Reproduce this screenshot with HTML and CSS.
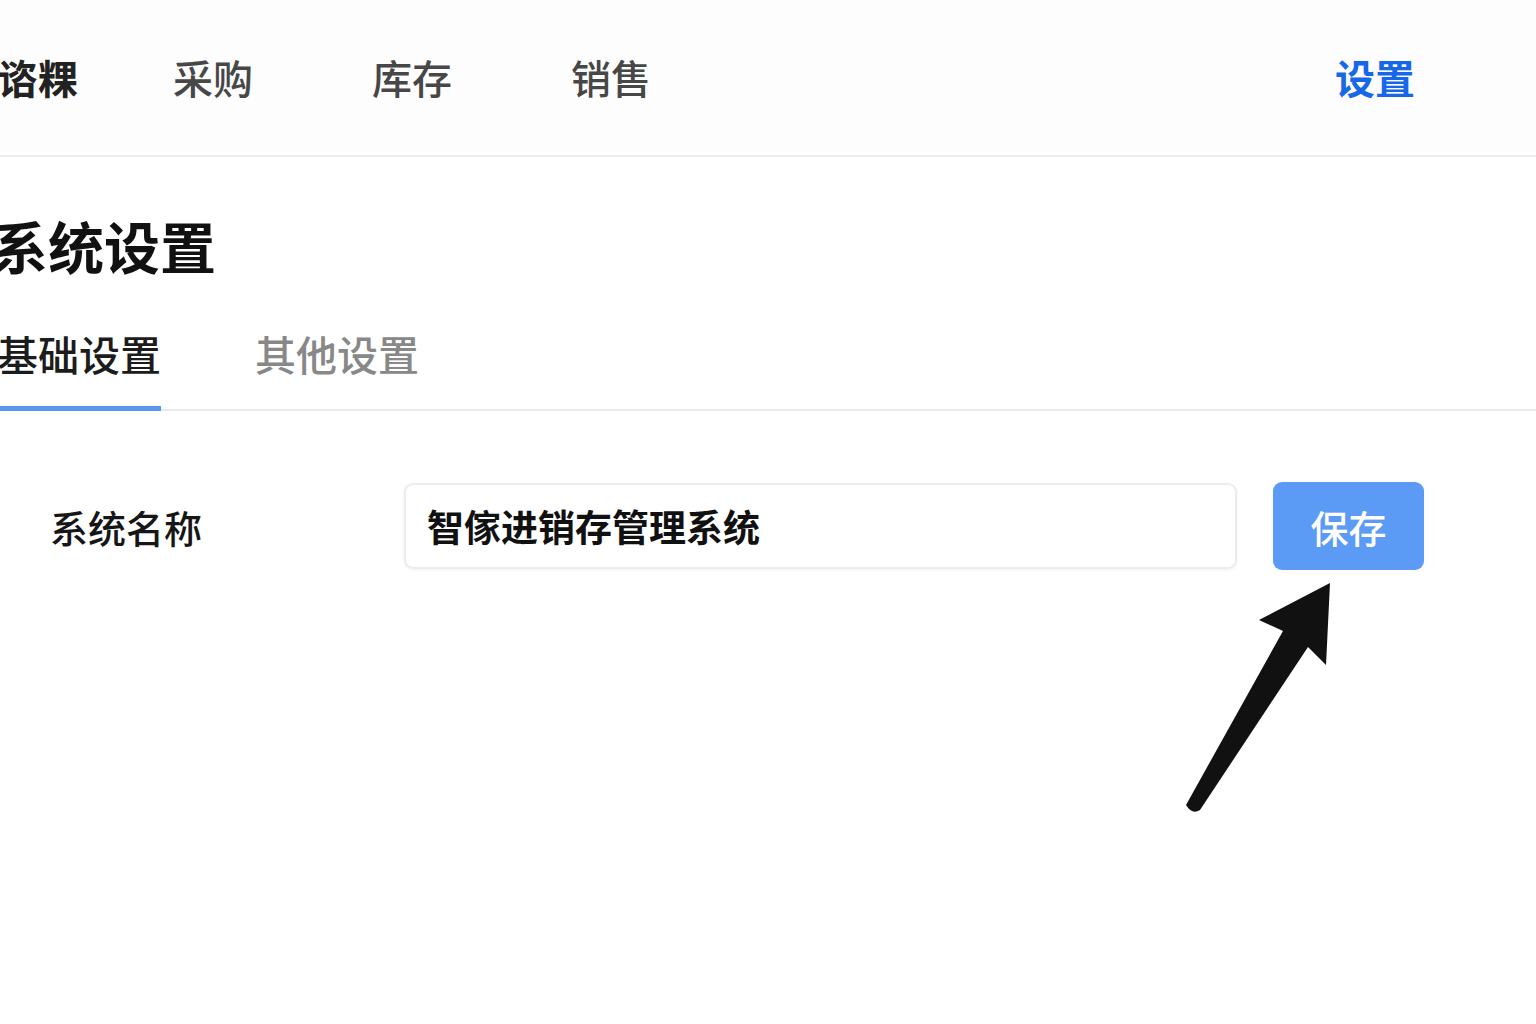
FILE: index.html
```html
<!DOCTYPE html>
<html lang="zh-CN">
<head>
<meta charset="utf-8">
<title>系统设置</title>
<link rel="stylesheet" href="styles.css">
</head>
<body>
<header class="nav">
  <a class="nav-item nav-first">谘粿</a>
  <a class="nav-item">采购</a>
  <a class="nav-item">库存</a>
  <a class="nav-item">销售</a>
  <a class="nav-item nav-active">设置</a>
</header>
<main class="main">
  <h1 class="title">系统设置</h1>
  <div class="tabs">
    <div class="tab tab-active">基础设置</div>
    <div class="tab">其他设置</div>
  </div>
  <div class="form-row">
    <label class="label">系统名称</label>
    <div class="input">智傢进销存管理系统</div>
    <button class="btn">保存</button>
  </div>
</main>
<svg class="arrow" width="180" height="250" viewBox="1170 575 180 250" xmlns="http://www.w3.org/2000/svg">
  <path d="M1330 583 L1326 665 L1308 647 L1200 810 Q1192 815 1186 805 L1283 631 L1259 620 Z" fill="#111"/>
</svg>
</body>
</html>
```
FILE: styles.css
```css
* { box-sizing: border-box; }
html, body { margin: 0; padding: 0; background: #ffffff; }
body {
  font-family: "Noto Sans CJK SC", "Noto Sans", sans-serif;
  width: 1536px;
  height: 1024px;
  overflow: hidden;
  position: relative;
}
.nav {
  height: 157px;
  display: flex;
  align-items: center;
  gap: 119px;
  margin-left: -2px;
  padding-bottom: 2px;
  border-bottom: 2px solid #ececec;
  background: #fdfdfd;
}
.nav-item {
  font-size: 40px;
  font-weight: 500;
  color: #474747;
  line-height: 1;
}
.nav-first { color: #222; font-weight: 700; margin-right: -24px; }
.nav-active { margin-left: auto; margin-right: 121px; color: #1767e9; font-weight: 700; }
.main { padding: 0; }
.title {
  margin: 54px 0 0 -8px;
  font-size: 56px;
  font-weight: 700;
  line-height: 67px;
  color: #111;
}
.tabs {
  margin-top: 47px;
  margin-left: -3px;
  display: flex;
  gap: 94px;
  border-bottom: 2px solid #e9e9e9;
}
.tab {
  font-size: 41px;
  font-weight: 500;
  line-height: 56px;
  padding-bottom: 25px;
  border-bottom: 5px solid transparent;
  margin-bottom: -2px;
  color: #888;
}
.tab-active { color: #1c1c1c; border-bottom-color: #5a95ef; }
.form-row {
  margin-top: 71px;
  display: flex;
  align-items: center;
}
.label {
  width: 404px;
  padding-left: 50px;
  font-size: 38px;
  font-weight: 500;
  color: #161616;
}
.input {
  width: 833px;
  height: 86px;
  border: 2px solid #ececec;
  border-radius: 9px;
  box-shadow: 0 1px 3px rgba(0,0,0,0.06);
  padding-left: 21px;
  display: flex;
  align-items: center;
  font-size: 37px;
  font-weight: 700;
  color: #111;
}
.btn {
  margin-left: 36px;
  width: 151px;
  height: 88px;
  border: none;
  border-radius: 9px;
  background: #5b9bf5;
  color: #fff;
  font-family: inherit;
  font-size: 38px;
  font-weight: 500;
  padding: 0;
}
.arrow {
  position: absolute;
  left: 1170px;
  top: 575px;
}
```
